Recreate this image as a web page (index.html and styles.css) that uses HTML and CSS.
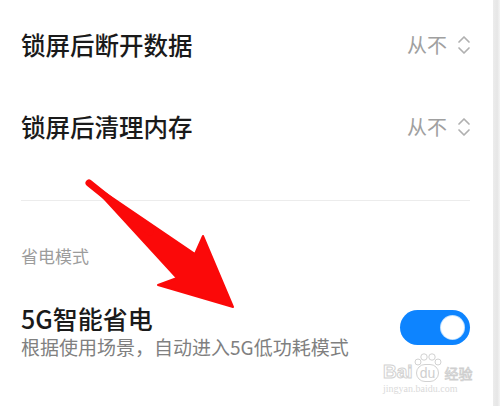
FILE: index.html
```html
<!DOCTYPE html>
<html lang="zh-CN">
<head>
<meta charset="utf-8">
<link rel="stylesheet" href="styles.css">
</head>
<body>
<div class="page">
  <div class="content">
    <div class="row">
      <span class="title">锁屏后断开数据</span>
      <span class="value">从不<svg class="updown" viewBox="0 0 14 22" width="14" height="22"><polyline points="2,8 7,3 12,8"/><polyline points="2,14 7,19 12,14"/></svg></span>
    </div>
    <div class="row">
      <span class="title">锁屏后清理内存</span>
      <span class="value">从不<svg class="updown" viewBox="0 0 14 22" width="14" height="22"><polyline points="2,8 7,3 12,8"/><polyline points="2,14 7,19 12,14"/></svg></span>
    </div>
    <div class="divider"></div>
    <div class="section">省电模式</div>
    <div class="item">
      <div class="texts">
        <div class="title">5G智能省电</div>
        <div class="sub">根据使用场景，自动进入5G低功耗模式</div>
      </div>
      <div class="toggle"><span class="knob"></span></div>
    </div>
  </div>
  <div class="edge"></div>
</div>

<svg class="arrow" width="500" height="406" viewBox="0 0 500 406">
  <polygon points="89,182 195,254 203,236 233,307 158,285 177,278" />
  <line x1="89" y1="183" x2="150" y2="232" />
</svg>

<div class="watermark">
  <div class="wm-top">
    <span class="wm-bai">Bai</span>
    <span class="wm-paw">
      <svg viewBox="0 0 30 14" width="30" height="14"><circle cx="5" cy="10" r="3"/><circle cx="11" cy="5" r="3.2"/><circle cx="19" cy="5" r="3.2"/><circle cx="25" cy="10" r="3"/></svg>
      <span class="wm-du">du</span>
    </span>
    <span class="wm-jy">经验</span>
  </div>
  <div class="wm-url">jingyan.baidu.com</div>
</div>
</body>
</html>
```

FILE: styles.css
```css
* { box-sizing: border-box; }
html, body { margin: 0; padding: 0; background: #fff; }
body {
  width: 500px;
  height: 406px;
  overflow: hidden;
  position: relative;
  font-family: "Noto Sans CJK SC", "Noto Sans", sans-serif;
}
.page {
  display: flex;
  height: 406px;
}
.content {
  width: 493px;
  padding: 4px 22px 0 21px;
}
.edge {
  width: 7px;
  background: linear-gradient(to right, #ececec 0, #e6e6e6 60%, #f4f4f4 100%);
}
.row {
  height: 82px;
  display: flex;
  align-items: center;
  justify-content: space-between;
}
.title {
  font-size: 24.5px;
  font-weight: 500;
  color: #1a1a1a;
  line-height: 30px;
}
.value {
  display: flex;
  align-items: center;
  font-size: 20px;
  color: #a0a0a0;
  line-height: 26px;
}
.updown {
  margin-left: 10px;
  fill: none;
  stroke: #b0b0b0;
  stroke-width: 1.7;
  stroke-linecap: round;
  stroke-linejoin: round;
}
.divider {
  margin-top: 32px;
  margin-right: 1px;
  height: 1px;
  background: #ececec;
}
.section {
  margin-top: 44px;
  font-size: 17px;
  line-height: 22px;
  color: #9c9c9c;
}
.item {
  margin-top: 36px;
  display: flex;
  align-items: center;
  justify-content: space-between;
}
.item .title {
  font-size: 25px;
  line-height: 30px;
}
.sub {
  font-size: 19px;
  line-height: 28px;
  color: #808080;
}
.toggle {
  width: 70px;
  height: 35px;
  border-radius: 18px;
  background: #0d84ff;
  margin-bottom: 9px;
  margin-right: 1px;
  display: flex;
  align-items: center;
  justify-content: flex-end;
  padding-right: 6px;
}
.knob {
  width: 23px;
  height: 23px;
  border-radius: 50%;
  background: #fff;
  box-shadow: 0 0 0 1px #bfe0ff;
}
.arrow {
  position: absolute;
  left: 0;
  top: 0;
  fill: #fb0909;
  stroke: #fb0909;
  stroke-linejoin: round;
}
.arrow polygon { stroke-width: 2; }
.arrow line { stroke-width: 7; stroke-linecap: round; }
.watermark {
  position: absolute;
  left: 383px;
  top: 350px;
  width: 92px;
  color: #d6d6d6;
  font-family: "Liberation Sans", Arial, sans-serif;
}
.wm-top {
  display: flex;
  align-items: flex-end;
  height: 32px;
}
.wm-bai {
  font-size: 19px;
  line-height: 20px;
  font-weight: 700;
  color: #fff;
  -webkit-text-stroke: 1px #d2d2d2;
}
.wm-paw {
  position: relative;
  width: 30px;
  display: flex;
  flex-direction: column;
  align-items: center;
}
.wm-paw svg {
  fill: #fff;
  stroke: #d2d2d2;
  stroke-width: 1;
}
.wm-du {
  font-size: 14px;
  line-height: 16px;
  padding: 0 3px;
  border: 1px solid #d2d2d2;
  border-radius: 9px;
  color: #cfcfcf;
  margin-top: -2px;
}
.wm-jy {
  font-family: "Noto Sans CJK SC", sans-serif;
  font-size: 14px;
  line-height: 18px;
  margin-left: 2px;
  color: #fff;
  -webkit-text-stroke: 0.8px #cfcfcf;
}
.wm-url {
  font-size: 10px;
  line-height: 12px;
  margin-top: 1px;
  color: #dadada;
  font-family: "Liberation Serif", serif;
}
```
